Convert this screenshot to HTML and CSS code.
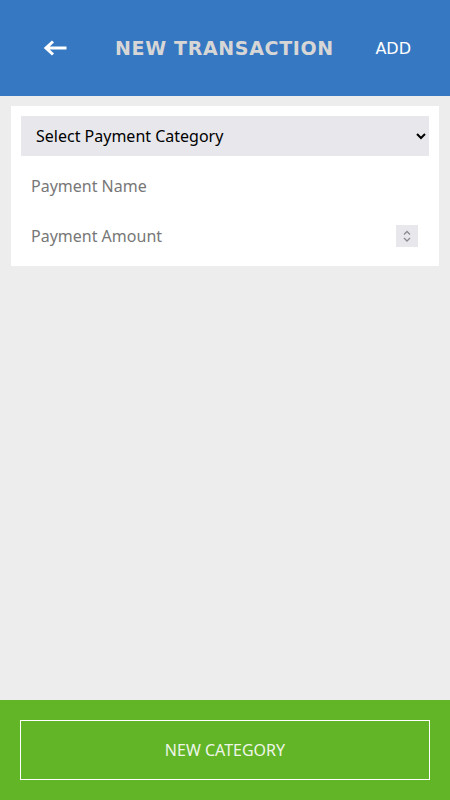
FILE: index.html
```html
<!DOCTYPE html>
<html>
<head>
<meta charset="utf-8">
<link rel="stylesheet" href="styles.css">
</head>
<body>
<div class="app">
  <header class="topbar">
    <span class="back" aria-label="Back">
      <svg width="23" height="16" viewBox="0 0 23 16"><path d="M2 8H22.5M9 1.5L2 8L9 14.5" fill="none" stroke="#fff" stroke-width="3" stroke-linejoin="miter"/></svg>
    </span>
    <h1 class="title">NEW TRANSACTION</h1>
    <span class="add">ADD</span>
  </header>
  <main class="content">
    <form class="card">
      <select class="select">
        <option>Select Payment Category</option>
      </select>
      <input class="field" type="text" placeholder="Payment Name">
      <div class="amount-row">
        <input class="field amount" type="text" inputmode="decimal" placeholder="Payment Amount">
        <span class="spinner">
          <svg width="22" height="22" viewBox="0 0 22 22"><path d="M8 9.5L11 6.5L14 9.5M8 13L11 16L14 13" fill="none" stroke="#8a8a90" stroke-width="1.3"/></svg>
        </span>
      </div>
    </form>
  </main>
  <footer class="footer">
    <button class="newcat" type="button">NEW CATEGORY</button>
  </footer>
</div>
</body>
</html>
```
FILE: styles.css
```css
html, body { margin: 0; padding: 0; }
body { background: #ededed; font-family: "Noto Sans", "Open Sans", sans-serif; }
.app { display: flex; flex-direction: column; height: 800px; }
.topbar {
  height: 96px; background: #3778c2; display: flex; align-items: center;
  padding: 0 39px 0 44px; box-sizing: border-box;
}
.back { display: flex; margin-top: 0; }
.title {
  margin: 0 0 0 48px; font-family: "DejaVu Sans", sans-serif; font-weight: bold;
  font-size: 19px; color: #d6d6d6; letter-spacing: 0.65px; flex: 1;
}
.add { color: #fff; font-family: "DejaVu Sans", sans-serif; font-size: 16px; }
.content { flex: 1; padding: 10px 11px; }
.card { background: #fff; padding: 10px 10px; display: flex; flex-direction: column; gap: 10px; margin: 0; }
.select {
  height: 40px; border: none; background-color: #e8e8ec; font-family: inherit;
  font-size: 16px; color: #000; padding: 0 10px 0 11px; border-radius: 0; outline: none;
}
.field {
  height: 40px; border: none; font-family: inherit; font-size: 16px; padding: 0 10px;
  box-sizing: border-box; outline: none; color: #333;
}
.field::placeholder { color: #777; }
.amount-row { display: flex; align-items: center; padding-right: 11px; }
.amount { flex: 1; min-width: 0; }
.spinner { display: flex; width: 22px; height: 22px; background: #e8e8ec; }
.footer { height: 100px; background: #62b526; padding: 20px; box-sizing: border-box; display: flex; }
.newcat {
  flex: 1; background: transparent; border: 1px solid #fff; color: #eef5e8;
  font-family: inherit; font-size: 16px; cursor: pointer;
}
```
